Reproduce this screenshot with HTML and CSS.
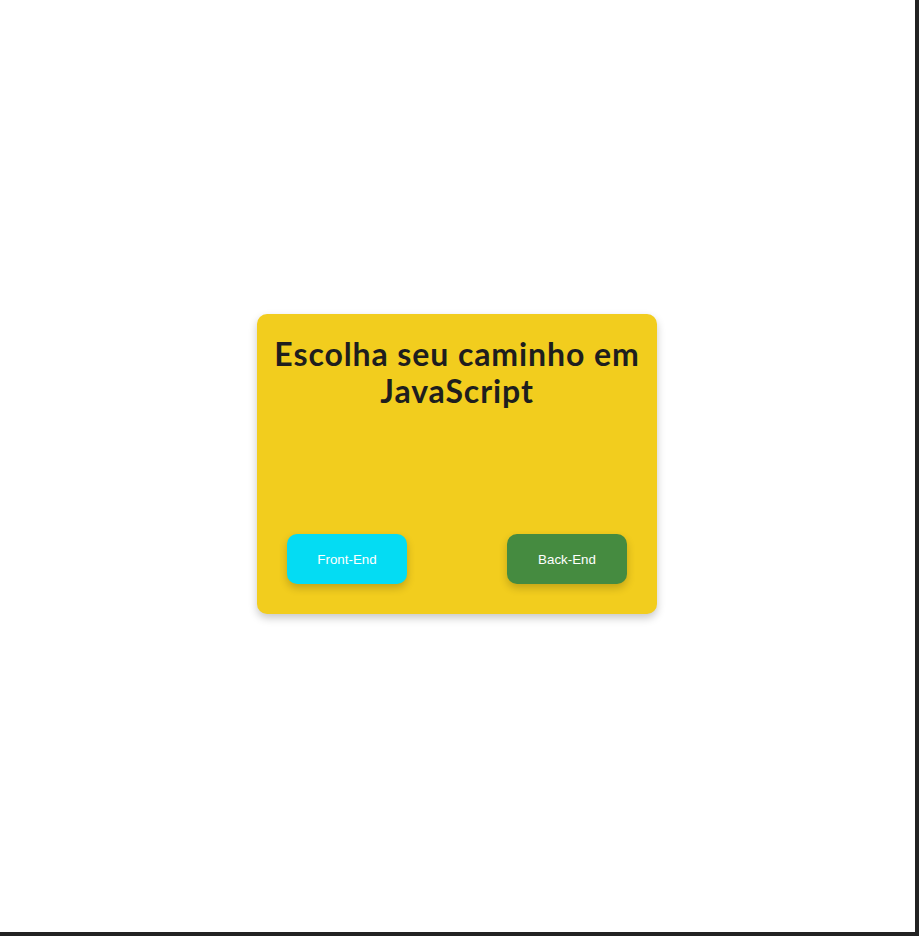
FILE: index.html
```html
<!DOCTYPE html>
<html lang="pt-BR">
<head>
<meta charset="utf-8">
<title>Escolha seu caminho em JavaScript</title>
<link rel="stylesheet" href="styles.css">
</head>
<body>
<div class="frame">
  <main class="card">
    <h1 class="title">Escolha seu caminho em JavaScript</h1>
    <div class="actions">
      <button class="btn btn-front">Front-End</button>
      <button class="btn btn-back">Back-End</button>
    </div>
  </main>
</div>
</body>
</html>
```

FILE: styles.css
```css
* { box-sizing: border-box; }
html, body { margin: 0; padding: 0; background: #ffffff; }
.frame {
  width: 919px;
  height: 936px;
  border-right: 4px solid #222222;
  border-bottom: 4px solid #222222;
  display: flex;
  align-items: center;
  justify-content: center;
  padding-bottom: 5px;
  padding-right: 1px;
}
.card {
  width: 400px;
  height: 300px;
  background: #f2cd1e;
  border-radius: 10px;
  box-shadow: 0 4px 8px rgba(0, 0, 0, 0.22);
  display: flex;
  flex-direction: column;
  justify-content: space-between;
}
.title {
  margin: 21px 0 0;
  font-family: "Lato", "Open Sans", sans-serif;
  font-weight: 700;
  font-size: 32px;
  letter-spacing: 0.9px;
  line-height: 37px;
  color: #1e1e1e;
  text-align: center;
}
.actions {
  display: flex;
  justify-content: space-between;
  padding: 0 30px 30px;
}
.btn {
  width: 120px;
  height: 50px;
  padding: 2px 0 0;
  border: none;
  border-radius: 10px;
  font-family: "Liberation Sans", Arial, sans-serif;
  font-size: 13.33px;
  color: #ffffff;
  box-shadow: 0 4px 8px rgba(0, 0, 0, 0.2);
  cursor: pointer;
}
.btn-front { background: #04dcf3; }
.btn-back { background: #458b40; }
```
